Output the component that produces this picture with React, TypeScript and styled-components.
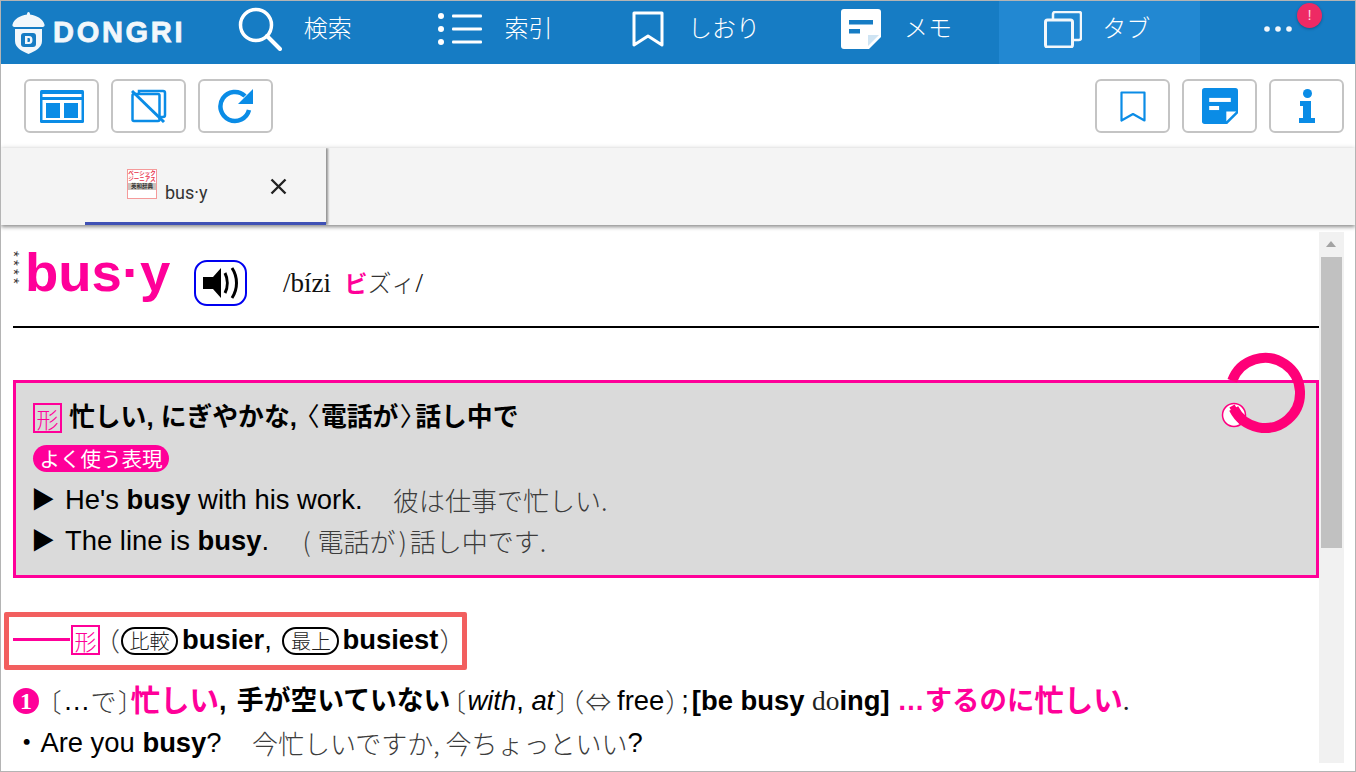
import React from "react";
import styled, { createGlobalStyle } from "styled-components";

const SANS = `"Liberation Sans", "Noto Sans CJK JP", sans-serif`;
const SERIF = `"Liberation Serif", "Noto Sans CJK JP", serif`;
const CJK = `"Noto Sans CJK JP", sans-serif`;
const PINK = "#ff0099";
const BLUE = "#0a8ce6";

const Global = createGlobalStyle`
  html, body { margin: 0; padding: 0; background: #fff; }
  * { box-sizing: border-box; }
`;

const Frame = styled.div`
  width: 1356px;
  height: 772px;
  border: 1px solid #b4b4b4;
  display: flex;
  flex-direction: column;
  overflow: hidden;
  font-family: ${SANS};
  background: #fff;
`;

const Header = styled.header`
  height: 63px;
  background: #167cc4;
  display: flex;
  flex: none;
  color: #fff;
`;

const Logo = styled.div`
  width: 196px;
  flex: none;
  display: flex;
  align-items: center;
  padding-left: 11px;
  gap: 8px;
`;

const LogoText = styled.span`
  font-family: "Liberation Sans", sans-serif;
  font-size: 29px;
  font-weight: 700;
  letter-spacing: 2.7px;
  -webkit-text-stroke: 0.8px #f2f7fb;
  color: #f2f7fb;
`;

const NavItem = styled.div<{ $active?: boolean; $gap: number }>`
  width: 200.6px;
  flex: none;
  display: flex;
  align-items: center;
  justify-content: center;
  gap: ${(p) => p.$gap}px;
  background: ${(p) => (p.$active ? "#2288d2" : "transparent")};
  font-family: ${CJK};
  font-weight: 300;
  font-size: 24px;
  padding: 0 5px 7px 0;
  white-space: nowrap;
`;

const NavLabel = styled.span`
  margin-bottom: 6px;
`;

const MoreItem = styled.div`
  flex: 1;
  position: relative;
  display: flex;
  align-items: center;
  padding-left: 64px;
  padding-bottom: 7px;
`;

const Badge = styled.span`
  position: absolute;
  left: 97px;
  top: 2px;
  width: 25px;
  height: 25px;
  border-radius: 50%;
  background: #ee2a64;
  box-shadow: 0 1px 3px rgba(0, 0, 0, 0.3);
  color: #fbd5e0;
  font-size: 15px;
  text-align: center;
  line-height: 24px;
`;

const Toolbar = styled.div`
  height: 84px;
  flex: none;
  display: flex;
  justify-content: space-between;
  padding: 15px 11px 0 23px;
`;

const ToolGroup = styled.div`
  display: flex;
  gap: 12px;
`;

const ToolButton = styled.div`
  width: 75px;
  height: 54px;
  border: 2px solid #c4c4c4;
  border-radius: 6px;
  display: flex;
  align-items: center;
  justify-content: center;
`;

const TabBar = styled.div`
  height: 77px;
  flex: none;
  background: #f4f4f4;
  box-shadow: 0 2px 4px rgba(0, 0, 0, 0.45), 0 -2px 4px rgba(0, 0, 0, 0.05);
  position: relative;
  z-index: 2;
`;

const Tab = styled.div`
  width: 325px;
  height: 77px;
  position: relative;
  box-shadow: 2px 0 2px rgba(0, 0, 0, 0.4);
  clip-path: inset(0 -6px 0 0);
  font-family: "Roboto", sans-serif;
  &::after {
    content: "";
    position: absolute;
    left: 84px;
    right: 0;
    bottom: 0;
    height: 3px;
    background: #3f51b5;
  }
`;

const TabInner = styled.div`
  display: flex;
  padding: 21px 0 0 126px;
`;

const BookThumb = styled.div`
  width: 30px;
  height: 30px;
  border: 1px solid #f59a9a;
  background: #fff;
  display: flex;
  flex-direction: column;
  align-items: center;
  overflow: hidden;
  font-family: ${CJK};
  font-weight: 700;
  font-size: 5.5px;
  line-height: 6px;
  color: #e8304a;
  text-align: center;
  flex: none;
`;

const BookTitle = styled.span`
  background: #c9c2bd;
  color: #333;
  width: 100%;
  margin-top: 1px;
  font-size: 5.5px;
  line-height: 7px;
`;

const TabLabel = styled.span`
  font-size: 18px;
  color: #333;
  margin: 14px 0 0 8px;
  line-height: 20px;
  width: 105px;
`;

const CloseIcon = styled.svg`
  margin-top: 9px;
  flex: none;
`;

const Pane = styled.div`
  flex: 1;
  min-height: 0;
  display: flex;
  padding-right: 11px;
`;

const Article = styled.main`
  flex: 1;
  min-width: 0;
  padding-left: 12px;
  overflow: hidden;
  color: #000;
`;

const TitleRow = styled.div`
  height: 103px;
  display: flex;
  border-bottom: 2px solid #000;
  align-items: flex-start;
`;

const Stars = styled.div`
  font-family: "Liberation Sans", sans-serif;
  font-size: 15px;
  line-height: 8px;
  letter-spacing: 3.2px;
  writing-mode: vertical-rl;
  width: 8px;
  height: 40px;
  margin: 26px 7px 0 -3px;
  color: #333;
  flex: none;
`;

const Headword = styled.h1`
  margin: 18px 0 0;
  font-size: 54.5px;
  line-height: 60px;
  font-weight: 700;
  color: ${PINK};
  width: 169px;
  flex: none;
`;

const SoundButton = styled.div`
  width: 53px;
  height: 46px;
  margin-top: 35px;
  border: 2px solid #0000f0;
  border-radius: 13px;
  display: flex;
  align-items: center;
  justify-content: center;
`;

const Pron = styled.div`
  margin: 42px 0 0 36px;
  font-family: ${SERIF};
  font-size: 27px;
  line-height: 30px;
  white-space: pre;
  color: #111;
`;

const PronKana = styled.span`
  font-family: ${CJK};
  font-weight: 300;
  font-size: 24px;
  color: #333;
`;

const PronMark = styled.span`
  font-family: ${CJK};
  font-weight: 700;
  font-size: 23px;
  color: ${PINK};
`;

const SummaryBox = styled.section`
  position: relative;
  margin-top: 52px;
  height: 198px;
  border: 3px solid ${PINK};
  background: #dadada;
  padding: 14px 0 0 17px;
`;

const Line = styled.div`
  height: 41px;
  font-size: 27.4px;
  line-height: 41px;
  white-space: pre;
  display: flex;
  align-items: center;
`;

const Heading = styled.span`
  font-weight: 700;
  font-size: 25.8px;
`;

const Marker = styled.span`
  width: 32px;
  flex: none;
  font-size: 24px;
  margin-left: -2px;
  margin-right: 2px;
`;

const PosBox = styled.span`
  width: 29px;
  height: 30px;
  flex: none;
  border: 2px solid ${PINK};
  color: ${PINK};
  font-family: ${CJK};
  font-weight: 300;
  font-size: 22px;
  line-height: 26px;
  text-align: center;
  margin-right: 7px;
`;

const Pill = styled.span`
  height: 27px;
  width: 136px;
  border-radius: 14px;
  background: ${PINK};
  color: #fff;
  font-family: ${CJK};
  font-size: 20.5px;
  line-height: 26px;
  text-align: center;
`;

const Jp = styled.span`
  font-family: ${CJK};
  font-weight: 300;
  font-size: 26px;
  color: #3c3c3c;
`;

const JpGap = styled(Jp)`
  margin-left: 3px;
`;

const ParenOpen = styled.span`
  margin: 0 7px 0 3px;
`;

const ParenClose = styled.span`
  margin: 0 3px;
`;

const Bracket = styled(Jp)`
  font-feature-settings: "palt";
  padding: 0 2px;
`;

const BracketLead = styled(Bracket)`
  margin-left: -3px;
`;

const BracketTrail = styled(Bracket)`
  margin-right: -3px;
`;

const BoldBracket = styled.span`
  font-feature-settings: "palt";
  font-weight: 400;
  padding: 0 2px;
`;

const Ring = styled.svg`
  position: absolute;
  right: 6px;
  top: -35px;
  overflow: visible;
`;

const Highlight = styled.div`
  width: fit-content;
  height: 58px;
  margin: 34px 0 0 -9px;
  border: 5px solid #f25f5f;
  border-radius: 2px;
  padding: 0 7px 3px 4px;
  display: flex;
  align-items: center;
  font-size: 27.4px;
  white-space: pre;
`;

const Dash = styled.span`
  width: 57px;
  height: 3px;
  flex: none;
  margin: 0 1px 0 0;
  background: ${PINK};
`;

const Tag = styled.span`
  display: inline-block;
  width: 57px;
  height: 28px;
  border: 2px solid #000;
  border-radius: 14px;
  font-family: ${CJK};
  font-weight: 300;
  font-size: 20px;
  line-height: 23px;
  text-align: center;
  margin: 2px 4px 0 0;
  color: #222;
  flex: none;
`;

const TagAfterComma = styled(Tag)`
  margin-left: 3px;
  margin-right: 3px;
`;

const Bold = styled.b`
  font-weight: 700;
`;

const BoldCjk = styled.b`
  font-weight: 700;
  font-size: 26.8px;
  word-spacing: 3px;
`;

const Semi = styled.span`
  margin-right: 3px;
`;

const DefLine = styled.div`
  height: 42px;
  line-height: 42px;
  font-size: 27.4px;
  white-space: pre;
  display: flex;
  align-items: center;
`;

const Num = styled.span`
  width: 26px;
  height: 26px;
  flex: none;
  border-radius: 50%;
  background: ${PINK};
  color: #fff;
  font-family: ${SERIF};
  font-weight: 700;
  font-size: 24px;
  line-height: 26px;
  text-align: center;
  margin-right: 7px;
`;

const PinkBig = styled.span`
  color: ${PINK};
  font-weight: 700;
  font-size: 29.5px;
`;

const PinkText = styled.span`
  color: ${PINK};
  font-weight: 700;
`;

const Serif = styled.span`
  font-family: ${SERIF};
  color: #222;
`;

const First = styled.div`
  margin-top: 10px;
`;

const ScrollTrack = styled.div`
  width: 25px;
  flex: none;
  margin: 7px 0 8px;
  background: #f1f1f1;
  position: relative;
  padding: 25px 2px 0;
`;

const ScrollUp = styled.span`
  position: absolute;
  left: 7px;
  top: 9px;
  width: 0;
  height: 0;
  border-left: 5.5px solid transparent;
  border-right: 5.5px solid transparent;
  border-bottom: 6px solid #a3a3a3;
`;

const ScrollThumb = styled.div`
  height: 291px;
  background: #c1c1c1;
`;

const MemoIcon = ({ size, bg, fg }: { size: number; bg: string; fg: string }) => (
  <svg width={size} height={size} viewBox="0 0 40 40">
    <path d="M3 0h34a3 3 0 0 1 3 3v25L28 40H3a3 3 0 0 1-3-3V3a3 3 0 0 1 3-3z" fill={bg} />
    <rect x="8" y="11" width="24" height="4.5" fill={fg} />
    <rect x="8" y="20" width="11" height="4.5" fill={fg} />
    <path d="M27 37V26h11z" fill={bg === "#fff" ? "#cfe4f3" : "#fff"} />
  </svg>
);

export default function App() {
  return (
    <>
      <Global />
      <Frame>
        <Header>
          <Logo>
            <svg width="33" height="42" viewBox="0 0 33 42">
              <path d="M16.5 0c1 0 1.500 1 1.500 2.500C25 3.500 31 7 32.500 12.500c.4 1.500-.4 2.500-2 2.500H2.500c-1.600 0-2.400-1-2-2.500C2 7 8 3.500 15 2.500 15 1 15.500 0 16.500 0z" fill="#f2f7fb" />
              <path d="M3 17h27v12c0 6-6 10-13.500 13C9 39 3 35 3 29z" fill="#f2f7fb" />
              <rect x="9" y="21" width="15" height="14" rx="3" fill="#167cc4" />
              <path d="M13 24h4c2.500 0 3.500 1.500 3.500 4s-1 4-3.500 4h-4zM15.500 26v4h1.500c1 0 1-1 1-2s0-2-1-2z" fill="#f2f7fb" fillRule="evenodd" />
            </svg>
            <LogoText>DONGRI</LogoText>
          </Logo>
          <NavItem $gap={22}>
            <svg width="44" height="44" viewBox="0 0 44 44" fill="none" stroke="#fff" strokeWidth="3.500" strokeLinecap="round">
              <circle cx="18" cy="18" r="15.500" />
              <path d="M29 29l13 13" strokeWidth="4" />
            </svg>
            <NavLabel>検索</NavLabel>
          </NavItem>
          <NavItem $gap={22}>
            <svg width="44" height="32" viewBox="0 0 44 32" fill="#fff">
              <circle cx="3" cy="3" r="3" /><circle cx="3" cy="16" r="3" /><circle cx="3" cy="29" r="3" />
              <rect x="14" y="1.500" width="30" height="3" rx="1" /><rect x="14" y="14.500" width="30" height="3" rx="1" /><rect x="14" y="27.500" width="30" height="3" rx="1" />
            </svg>
            <NavLabel>索引</NavLabel>
          </NavItem>
          <NavItem $gap={24}>
            <svg width="32" height="37" viewBox="0 0 32 37" fill="none" stroke="#fff" strokeWidth="3" strokeLinejoin="round">
              <path d="M2 2h28v32L16 25 2 34z" />
            </svg>
            <NavLabel>しおり</NavLabel>
          </NavItem>
          <NavItem $gap={23}>
            <MemoIcon size={40} bg="#fff" fg="#167cc4" />
            <NavLabel>メモ</NavLabel>
          </NavItem>
          <NavItem $active $gap={20}>
            <svg width="38" height="37" viewBox="0 0 38 37" fill="none" stroke="#f2f7fb" strokeWidth="2.500" strokeLinejoin="round">
              <rect x="1.500" y="9" width="27" height="27" rx="2" strokeWidth="3" />
              <path d="M9 8V3a2 2 0 0 1 2-2h24a2 2 0 0 1 2 2v24a2 2 0 0 1-2 2h-5" />
            </svg>
            <NavLabel>タブ</NavLabel>
          </NavItem>
          <MoreItem>
            <svg width="28" height="6" viewBox="0 0 28 6" fill="#f2f7fb">
              <circle cx="3" cy="3" r="2.800" /><circle cx="14" cy="3" r="2.800" /><circle cx="25" cy="3" r="2.800" />
            </svg>
            <Badge>!</Badge>
          </MoreItem>
        </Header>

        <Toolbar>
          <ToolGroup>
            <ToolButton>
              <svg width="44" height="33" viewBox="0 0 44 33">
                <rect width="44" height="33" rx="1.500" fill={BLUE} />
                <rect x="2.500" y="4" width="39" height="3" fill="#fff" />
                <rect x="2.500" y="10" width="39" height="20" fill="#fff" />
                <rect x="6" y="13" width="14" height="15" fill={BLUE} />
                <rect x="24" y="13" width="14" height="15" fill={BLUE} />
              </svg>
            </ToolButton>
            <ToolButton>
              <svg width="36" height="34" viewBox="0 0 36 34" fill="none" stroke={BLUE} strokeWidth="2.500">
                <rect x="1.500" y="5" width="27" height="27" rx="1.500" />
                <path d="M8 5V2h24a2 2 0 0 1 2 2v22a2 2 0 0 1-2 2h-3" />
                <path d="M1 2l32 31" strokeWidth="3" />
              </svg>
            </ToolButton>
            <ToolButton>
              <svg width="36" height="36" viewBox="0 0 36 36" fill="none">
                <path d="M31 22a14.500 14.500 0 1 1-4-14" stroke={BLUE} strokeWidth="4.500" />
                <path d="M35 1v15H20z" fill={BLUE} />
              </svg>
            </ToolButton>
          </ToolGroup>
          <ToolGroup>
            <ToolButton>
              <svg width="26" height="31" viewBox="0 0 26 31" fill="none" stroke={BLUE} strokeWidth="2.200" strokeLinejoin="round">
                <path d="M1.500 1.500h23v28L13 23 1.500 29.500z" />
              </svg>
            </ToolButton>
            <ToolButton>
              <MemoIcon size={36} bg={BLUE} fg="#fff" />
            </ToolButton>
            <ToolButton>
              <svg width="16" height="34" viewBox="0 0 16 34" fill={BLUE}>
                <circle cx="8.500" cy="4.500" r="4.500" />
                <path d="M1 12h11v17h4v5H0v-5h4V17H1z" />
              </svg>
            </ToolButton>
          </ToolGroup>
        </Toolbar>

        <TabBar>
          <Tab>
            <TabInner>
              <BookThumb>
                ベーシック<br />ジーニアス
                <BookTitle>英和辞典</BookTitle>
              </BookThumb>
              <TabLabel>bus·y</TabLabel>
              <CloseIcon width="17" height="17" viewBox="0 0 17 17" stroke="#222" strokeWidth="2.400">
                <path d="M1.500 1.500l14 14M15.500 1.500l-14 14" />
              </CloseIcon>
            </TabInner>
          </Tab>
        </TabBar>

        <Pane>
          <Article>
            <TitleRow>
              <Stars>****</Stars>
              <Headword>bus·y</Headword>
              <SoundButton>
                <svg width="36" height="32" viewBox="0 0 36 32" fill="none" stroke="#000">
                  <path d="M0 10h10l8-9v30l-8-9H0z" fill="#000" stroke="none" />
                  <path d="M22 6c3 6 3 14 0 20" strokeWidth="3" />
                  <path d="M29 1c6 9 6 21 0 30" strokeWidth="3" />
                </svg>
              </SoundButton>
              <Pron>/bízi  <PronMark>ビ</PronMark><PronKana>ズィ</PronKana>/</Pron>
            </TitleRow>

            <SummaryBox>
              <Line>
                <PosBox>形</PosBox>
                <Heading>忙しい, にぎやかな, <BoldBracket>〈</BoldBracket>電話が<BoldBracket>〉</BoldBracket>話し中で</Heading>
              </Line>
              <Line><Pill>よく使う表現</Pill></Line>
              <Line><Marker>▶</Marker>He's <Bold>busy</Bold> with his work.　<JpGap>彼は仕事で忙しい.</JpGap></Line>
              <Line><Marker>▶</Marker>The line is <Bold>busy</Bold>.　<JpGap><ParenOpen>(</ParenOpen>電話が<ParenClose>)</ParenClose>話し中です.</JpGap></Line>
              <Ring width="90" height="90" viewBox="0 0 90 90" fill="none">
                <circle cx="14" cy="67" r="11.500" fill="#fff" stroke="#ff0080" strokeWidth="1.500" />
                <path d="M12.200 32.800A35 35 0 1 1 13.700 60.600" stroke="#ff0078" strokeWidth="10" />
                <path d="M12 58l10 17" stroke="#ff0078" strokeWidth="6" />
              </Ring>
            </SummaryBox>

            <Highlight>
              <Dash />
              <PosBox>形</PosBox>
              <BracketLead>（</BracketLead>
              <Tag>比較</Tag>
              <Bold>busier</Bold>, <TagAfterComma>最上</TagAfterComma>
              <Bold>busiest</Bold>
              <Bracket>）</Bracket>
            </Highlight>

            <First>
              <DefLine>
                <Num>1</Num>
                <Bracket>〔</Bracket>…<Jp>で</Jp><BracketTrail>〕</BracketTrail>
                <PinkBig>忙しい</PinkBig>
                <BoldCjk>, 手が空いていない</BoldCjk>
                <Bracket>〔</Bracket><i>with</i>, <i>at</i><Bracket>〕</Bracket><BracketLead>（</BracketLead><Jp>⇔ </Jp>free<Bracket>）</Bracket><Semi>;</Semi>
                <Bold>[be busy </Bold><Serif>do</Serif><Bold>ing] </Bold>
                <PinkText>…するのに</PinkText><PinkBig>忙しい</PinkBig><Serif>.</Serif>
              </DefLine>
              <DefLine>・Are you <Bold>busy</Bold>?　<JpGap>今忙しいですか, 今ちょっといい</JpGap>?</DefLine>
            </First>
          </Article>
          <ScrollTrack>
            <ScrollUp />
            <ScrollThumb />
          </ScrollTrack>
        </Pane>
      </Frame>
    </>
  );
}
